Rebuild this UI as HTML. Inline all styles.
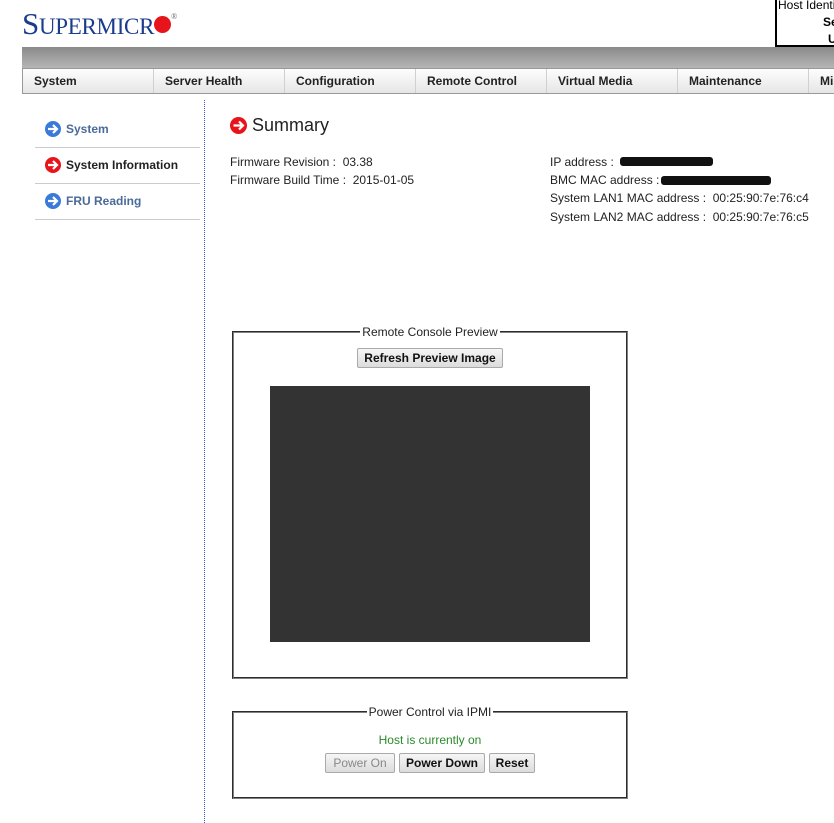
<!DOCTYPE html>
<html><head><style>
body{margin:0;width:834px;height:823px;overflow:hidden;background:#fff;font-family:"Liberation Sans",Arial,sans-serif;position:relative}
.a{position:absolute}
.nav{left:22px;top:68px;width:830px;height:24px;border:1px solid #999;border-left:1px solid #999;background:linear-gradient(#fdfdfd,#e6e6e6);}
.nav div{position:absolute;top:0;height:24px;line-height:25px;font-size:12px;font-weight:bold;color:#222;padding-left:11px;border-right:1px solid #d0d0d0;box-sizing:border-box;width:131px}
.side{left:35px;width:165px;height:36px;border-bottom:1px solid #ccc;font-size:12px;font-weight:bold;color:#4a6a9a;line-height:34px;box-sizing:border-box}
.side span{position:absolute;left:31px}
.ic{position:absolute;left:10px;top:9px;width:16px;height:16px;border-radius:50%}
.t{font-size:12px;color:#222;white-space:nowrap}
fieldset{position:absolute;margin:0;padding:0;border:2px solid #808080;border-style:groove;box-sizing:border-box}
legend{font-size:12px;color:#222;margin:0 auto;padding:0 2px}
.b{position:absolute;height:20px;box-sizing:border-box;border:1px solid #aaa;border-radius:2px;background:linear-gradient(#f6f6f6,#dcdcdc);font-size:12px;font-weight:bold;color:#111;text-align:center;line-height:18px}
.blk{background:#111;height:9px;border-radius:3px}
</style></head><body>
<div class="a" style="left:22px;top:6px;font-family:'Liberation Serif',serif;color:#1a3c8c;font-size:31px;letter-spacing:-0.3px;white-space:nowrap">S<span style="font-size:23px">UPERMICR</span><span style="display:inline-block;width:17px;height:17px;background:#e8141c;border-radius:50%;vertical-align:1px"></span><span style="font-size:8px;vertical-align:15px;color:#666">®</span></div>
<div class="a" style="left:775px;top:-5px;width:70px;height:52px;border:2px solid #000;box-sizing:border-box;font-size:12px;line-height:17px;overflow:hidden">
<div style="white-space:nowrap;padding-left:1px">Host Identi</div><div style="font-weight:bold;padding-left:46px">Se</div><div style="font-weight:bold;padding-left:51px">U</div></div>
<div class="a" style="left:22px;top:47px;width:812px;height:21px;background:linear-gradient(#8a8a8a,#b5b5b5)"></div>
<div class="a nav">
<div style="left:0">System</div><div style="left:131px">Server Health</div><div style="left:262px">Configuration</div><div style="left:393px">Remote Control</div><div style="left:524px">Virtual Media</div><div style="left:655px">Maintenance</div><div style="left:786px">Mis</div>
</div>
<div class="a side" style="top:112px"><div class="ic" style="background:#3a7ad8"></div><span>System</span></div>
<div class="a side" style="top:148px;color:#222"><div class="ic" style="background:#e8141c"></div><span>System Information</span></div>
<div class="a side" style="top:184px"><div class="ic" style="background:#3a7ad8"></div><span>FRU Reading</span></div>
<svg class="a" style="left:45px;top:121px" width="16" height="100"><g fill="none" stroke="#fff" stroke-width="2.2"><path d="M3 8H12M8 4L12 8L8 12"/><path d="M3 44H12M8 40L12 44L8 48"/><path d="M3 80H12M8 76L12 80L8 84"/></g></svg>
<div class="a" style="left:204px;top:100px;height:723px;border-left:1px dotted #3355cc"></div>
<div class="a" style="left:230px;top:117px;width:17px;height:17px;border-radius:50%;background:#e8141c"></div>
<svg class="a" style="left:230px;top:117px" width="17" height="17"><path d="M3.5 8.5H13M9 4.5L13 8.5L9 12.5" fill="none" stroke="#fff" stroke-width="2.2"/></svg>
<div class="a" style="left:252px;top:115px;font-size:18px;color:#222">Summary</div>
<div class="a t" style="left:230px;top:155px">Firmware Revision :&nbsp; 03.38</div>
<div class="a t" style="left:230px;top:173px">Firmware Build Time :&nbsp; 2015-01-05</div>
<div class="a t" style="left:550px;top:155px">IP address :</div><div class="a blk" style="left:620px;top:157px;width:93px"></div>
<div class="a t" style="left:550px;top:173px">BMC MAC address :</div><div class="a blk" style="left:661px;top:176px;width:110px"></div>
<div class="a t" style="left:550px;top:191px">System LAN1 MAC address :&nbsp; 00:25:90:7e:76:c4</div>
<div class="a t" style="left:550px;top:210px">System LAN2 MAC address :&nbsp; 00:25:90:7e:76:c5</div>
<fieldset style="left:232px;top:325px;width:396px;height:354px"><legend>Remote Console Preview</legend></fieldset>
<div class="b" style="left:357px;top:348px;width:146px">Refresh Preview Image</div>
<div class="a" style="left:270px;top:386px;width:320px;height:256px;background:#333"></div>
<fieldset style="left:232px;top:705px;width:396px;height:94px"><legend>Power Control via IPMI</legend></fieldset>
<div class="a t" style="left:232px;top:733px;width:396px;text-align:center;color:#2a8a2a">Host is currently on</div>
<div class="b" style="left:325px;top:753px;width:70px;color:#888;font-weight:normal">Power On</div>
<div class="b" style="left:399px;top:753px;width:86px">Power Down</div>
<div class="b" style="left:489px;top:753px;width:46px">Reset</div>
</body></html>
